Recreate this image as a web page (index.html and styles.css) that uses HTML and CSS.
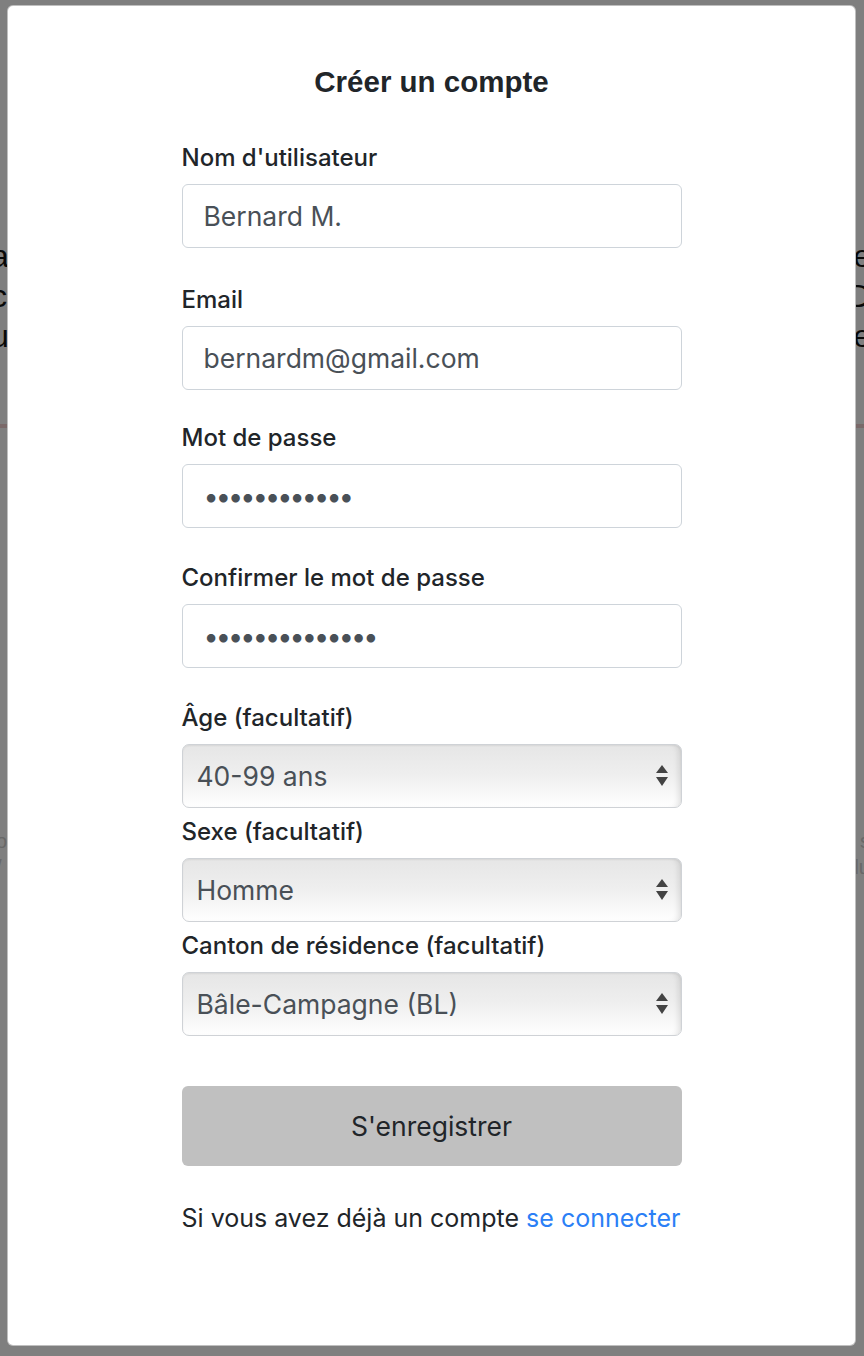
FILE: index.html
```html
<!DOCTYPE html>
<html lang="fr">
<head>
<meta charset="utf-8">
<title>Créer un compte</title>
<link rel="stylesheet" href="styles.css">
</head>
<body>
<div class="page-behind" aria-hidden="true">
  <p class="behind-text">a justo sed tempor et magna amet elit une<br>c quis facilisis dolor sit amet nonummy D<br>u magna vitae tellus neque lorem ipsum e</p>
  <div class="behind-rule"></div>
  <p class="behind-small">o lorem ipsum dolor sit amet consectetur s<br>/ dolor sit amet elit sed do eiusmod plu</p>
</div>
<div class="backdrop">
  <div class="modal">
    <h1 class="modal-title">Créer un compte</h1>
    <form class="form">
      <div class="group">
        <label class="label" for="u">Nom d'utilisateur</label>
        <input class="control" id="u" type="text" value="Bernard M.">
      </div>
      <div class="group">
        <label class="label" for="e">Email</label>
        <input class="control" id="e" type="email" value="bernardm@gmail.com">
      </div>
      <div class="group">
        <label class="label" for="p">Mot de passe</label>
        <input class="control pwd" id="p" type="password" value="abcdefghijkl">
      </div>
      <div class="group">
        <label class="label" for="p2">Confirmer le mot de passe</label>
        <input class="control pwd" id="p2" type="password" value="abcdefghijklmn">
      </div>
      <div class="group group-select">
        <label class="label" for="a">Âge (facultatif)</label>
        <div class="select-wrap">
          <select class="select" id="a"><option>40-99 ans</option></select>
          <svg class="arrows" width="12" height="21" viewBox="0 0 12 21"><path d="M6 0L12 8H0Z M0 12H12L6 21Z" fill="#434343"/></svg>
        </div>
      </div>
      <div class="group group-select">
        <label class="label" for="s">Sexe (facultatif)</label>
        <div class="select-wrap">
          <select class="select" id="s"><option>Homme</option></select>
          <svg class="arrows" width="12" height="21" viewBox="0 0 12 21"><path d="M6 0L12 8H0Z M0 12H12L6 21Z" fill="#434343"/></svg>
        </div>
      </div>
      <div class="group group-select">
        <label class="label" for="c">Canton de résidence (facultatif)</label>
        <div class="select-wrap">
          <select class="select" id="c"><option>Bâle-Campagne (BL)</option></select>
          <svg class="arrows" width="12" height="21" viewBox="0 0 12 21"><path d="M6 0L12 8H0Z M0 12H12L6 21Z" fill="#434343"/></svg>
        </div>
      </div>
      <button class="submit" type="button">S'enregistrer</button>
      <p class="footer-text">Si vous avez déjà un compte <a class="link" href="#">se connecter</a></p>
    </form>
  </div>
</div>
</body>
</html>
```
FILE: styles.css
```css
* { box-sizing: border-box; }

html, body {
  margin: 0;
  padding: 0;
  background: #fff;
  font-family: Inter, "Noto Sans", "Liberation Sans", sans-serif;
  color: #212529;
}

body {
  position: relative;
  width: 864px;
  height: 1356px;
  overflow: hidden;
}

.page-behind {
  position: absolute;
  inset: 0;
  padding-top: 236px;
}

.behind-text {
  margin: 0 0 0 -9px;
  width: 880px;
  font-family: "Liberation Sans", sans-serif;
  font-size: 32px;
  line-height: 40px;
  text-align: justify;
  text-align-last: justify;
  color: #111;
}

.behind-rule {
  margin-top: 68px;
  height: 4px;
  background: #f4d2d2;
}

.behind-small {
  margin: 400px 0 0 -4px;
  width: 874px;
  font-family: "Liberation Sans", sans-serif;
  font-size: 20px;
  line-height: 26px;
  text-align: justify;
  text-align-last: justify;
  color: #d0d0d0;
}

.backdrop {
  position: absolute;
  inset: 0;
  background: rgba(0, 0, 0, 0.5);
  padding: 5px 8px 0 7px;
}

.modal {
  height: 1341px;
  background: #fff;
  border: 1px solid rgba(0, 0, 0, 0.25);
  border-radius: 6px;
  padding-top: 58px;
}

.modal-title {
  margin: 0;
  text-align: center;
  font-family: "Liberation Sans", Arial, sans-serif;
  font-size: 29.5px;
  line-height: 36px;
  font-weight: 700;
  color: #212529;
}

.form {
  width: 500px;
  margin: 42px auto 0;
  display: flex;
  flex-direction: column;
}

.group {
  display: flex;
  flex-direction: column;
  margin-bottom: 34px;
}

.group:first-child {
  margin-bottom: 36px;
}

.group:nth-child(2) {
  margin-bottom: 32px;
}

.group-select {
  margin-bottom: 8px;
}

.label {
  font-size: 24px;
  line-height: 32px;
  font-weight: 500;
  color: #212529;
  margin-bottom: 10px;
}

.control {
  height: 64px;
  width: 100%;
  border: 1px solid #ced4da;
  border-radius: 6px;
  padding: 0 21px;
  font-family: Inter, "Noto Sans", sans-serif;
  font-size: 26.5px;
  color: #495057;
  background: #fff;
  outline: none;
}

.pwd {
  letter-spacing: -2.9px;
  font-size: 27px;
}

.select-wrap {
  position: relative;
  height: 64px;
}

.select {
  -webkit-appearance: none;
  appearance: none;
  width: 100%;
  height: 64px;
  border: 1px solid #cfd2d6;
  border-radius: 7px;
  padding: 0 40px 0 14px;
  font-family: Inter, "Noto Sans", sans-serif;
  font-size: 26.5px;
  color: #495057;
  background: linear-gradient(#e6e6e6 0%, #eeeeee 45%, #fafafa 85%, #ffffff 100%);
  box-shadow: inset -6px 0 6px -4px rgba(0, 0, 0, 0.12), inset 0 1px 2px rgba(0, 0, 0, 0.06);
  outline: none;
}

.arrows {
  position: absolute;
  right: 14px;
  top: 21px;
  pointer-events: none;
}

.submit {
  margin-top: 42px;
  height: 80px;
  width: 100%;
  border: none;
  border-radius: 6px;
  background: #c0c0c0;
  font-family: Inter, "Noto Sans", sans-serif;
  font-size: 26.5px;
  color: #212529;
}

.footer-text {
  margin: 33px 0 0;
  font-size: 25px;
  line-height: 38px;
  white-space: nowrap;
  color: #212529;
}

.link {
  color: #2b7ff6;
  text-decoration: none;
}
```
